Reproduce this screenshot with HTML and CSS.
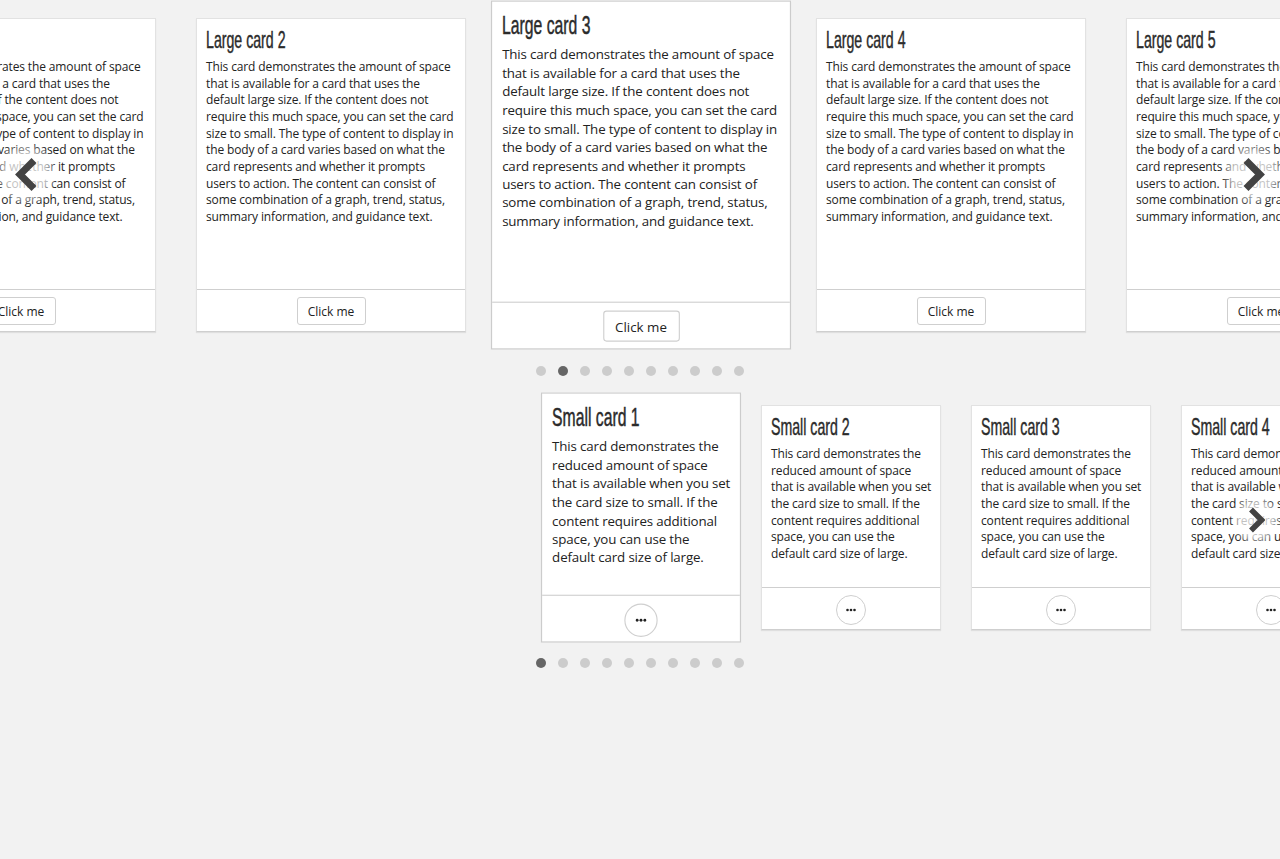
FILE: index.html
```html
<!DOCTYPE html>
<html lang="en">
<head>
<meta charset="utf-8">
<title>Cards carousel</title>
<link rel="stylesheet" href="styles.css">
</head>
<body>
<main class="page">
  <section class="carousel carousel-large">
    <div class="track track-large">
      <article class="card card-large">
        <div class="card-body">
          <h2 class="card-title"><span class="title-text">Large card 1</span></h2>
          <p class="card-text">This card demonstrates the amount of space that is available for a card that uses the default large size. If the content does not require this much space, you can set the card size to small. The type of content to display in the body of a card varies based on what the card represents and whether it prompts users to action. The content can consist of some combination of a graph, trend, status, summary information, and guidance text.</p>
        </div>
        <div class="card-footer"><button class="btn">Click me</button></div>
      </article>
      <article class="card card-large">
        <div class="card-body">
          <h2 class="card-title"><span class="title-text">Large card 2</span></h2>
          <p class="card-text">This card demonstrates the amount of space that is available for a card that uses the default large size. If the content does not require this much space, you can set the card size to small. The type of content to display in the body of a card varies based on what the card represents and whether it prompts users to action. The content can consist of some combination of a graph, trend, status, summary information, and guidance text.</p>
        </div>
        <div class="card-footer"><button class="btn">Click me</button></div>
      </article>
      <article class="card card-large is-active">
        <div class="card-body">
          <h2 class="card-title"><span class="title-text">Large card 3</span></h2>
          <p class="card-text">This card demonstrates the amount of space that is available for a card that uses the default large size. If the content does not require this much space, you can set the card size to small. The type of content to display in the body of a card varies based on what the card represents and whether it prompts users to action. The content can consist of some combination of a graph, trend, status, summary information, and guidance text.</p>
        </div>
        <div class="card-footer"><button class="btn">Click me</button></div>
      </article>
      <article class="card card-large">
        <div class="card-body">
          <h2 class="card-title"><span class="title-text">Large card 4</span></h2>
          <p class="card-text">This card demonstrates the amount of space that is available for a card that uses the default large size. If the content does not require this much space, you can set the card size to small. The type of content to display in the body of a card varies based on what the card represents and whether it prompts users to action. The content can consist of some combination of a graph, trend, status, summary information, and guidance text.</p>
        </div>
        <div class="card-footer"><button class="btn">Click me</button></div>
      </article>
      <article class="card card-large">
        <div class="card-body">
          <h2 class="card-title"><span class="title-text">Large card 5</span></h2>
          <p class="card-text">This card demonstrates the amount of space that is available for a card that uses the default large size. If the content does not require this much space, you can set the card size to small. The type of content to display in the body of a card varies based on what the card represents and whether it prompts users to action. The content can consist of some combination of a graph, trend, status, summary information, and guidance text.</p>
        </div>
        <div class="card-footer"><button class="btn">Click me</button></div>
      </article>
    </div>
    <button class="nav nav-prev nav-large" aria-label="Previous">
      <svg viewBox="0 0 23 35" width="23" height="35"><path d="M19 3.5 L5 17.5 L19 31.5" fill="none" stroke="#434343" stroke-width="7"/></svg>
    </button>
    <button class="nav nav-next nav-large" aria-label="Next">
      <svg viewBox="0 0 23 35" width="23" height="35"><path d="M4 3.5 L18 17.5 L4 31.5" fill="none" stroke="#434343" stroke-width="7"/></svg>
    </button>
    <div class="dots">
      <span class="dot"></span><span class="dot active"></span><span class="dot"></span><span class="dot"></span><span class="dot"></span><span class="dot"></span><span class="dot"></span><span class="dot"></span><span class="dot"></span><span class="dot"></span>
    </div>
  </section>

  <section class="carousel carousel-small">
    <div class="track track-small">
      <article class="card card-small is-active">
        <div class="card-body">
          <h2 class="card-title"><span class="title-text">Small card 1</span></h2>
          <p class="card-text">This card demonstrates the reduced amount of space that is available when you set the card size to small. If the content requires additional space, you can use the default card size of large.</p>
        </div>
        <div class="card-footer"><button class="btn-round" aria-label="More"><svg viewBox="0 0 10 4" width="10" height="4"><circle cx="1.5" cy="2" r="1.3" fill="#222"/><circle cx="5" cy="2" r="1.3" fill="#222"/><circle cx="8.5" cy="2" r="1.3" fill="#222"/></svg></button></div>
      </article>
      <article class="card card-small">
        <div class="card-body">
          <h2 class="card-title"><span class="title-text">Small card 2</span></h2>
          <p class="card-text">This card demonstrates the reduced amount of space that is available when you set the card size to small. If the content requires additional space, you can use the default card size of large.</p>
        </div>
        <div class="card-footer"><button class="btn-round" aria-label="More"><svg viewBox="0 0 10 4" width="10" height="4"><circle cx="1.5" cy="2" r="1.3" fill="#222"/><circle cx="5" cy="2" r="1.3" fill="#222"/><circle cx="8.5" cy="2" r="1.3" fill="#222"/></svg></button></div>
      </article>
      <article class="card card-small">
        <div class="card-body">
          <h2 class="card-title"><span class="title-text">Small card 3</span></h2>
          <p class="card-text">This card demonstrates the reduced amount of space that is available when you set the card size to small. If the content requires additional space, you can use the default card size of large.</p>
        </div>
        <div class="card-footer"><button class="btn-round" aria-label="More"><svg viewBox="0 0 10 4" width="10" height="4"><circle cx="1.5" cy="2" r="1.3" fill="#222"/><circle cx="5" cy="2" r="1.3" fill="#222"/><circle cx="8.5" cy="2" r="1.3" fill="#222"/></svg></button></div>
      </article>
      <article class="card card-small">
        <div class="card-body">
          <h2 class="card-title"><span class="title-text">Small card 4</span></h2>
          <p class="card-text">This card demonstrates the reduced amount of space that is available when you set the card size to small. If the content requires additional space, you can use the default card size of large.</p>
        </div>
        <div class="card-footer"><button class="btn-round" aria-label="More"><svg viewBox="0 0 10 4" width="10" height="4"><circle cx="1.5" cy="2" r="1.3" fill="#222"/><circle cx="5" cy="2" r="1.3" fill="#222"/><circle cx="8.5" cy="2" r="1.3" fill="#222"/></svg></button></div>
      </article>
    </div>
    <button class="nav nav-next nav-small" aria-label="Next">
      <svg viewBox="0 0 17 26" width="17" height="26"><path d="M3 2.5 L13.5 13 L3 23.5" fill="none" stroke="#434343" stroke-width="5.5"/></svg>
    </button>
    <div class="dots">
      <span class="dot active"></span><span class="dot"></span><span class="dot"></span><span class="dot"></span><span class="dot"></span><span class="dot"></span><span class="dot"></span><span class="dot"></span><span class="dot"></span><span class="dot"></span>
    </div>
  </section>
</main>
</body>
</html>
```

FILE: styles.css
```css
* { box-sizing: border-box; }

html, body {
  margin: 0;
  padding: 0;
  background: #f2f2f2;
}

body {
  font-family: "Open Sans", "DejaVu Sans", sans-serif;
  color: #222;
  width: 1280px;
  height: 859px;
  overflow: hidden;
}

.page {
  display: flex;
  flex-direction: column;
}

.carousel {
  position: relative;
  display: flex;
  flex-direction: column;
}

.carousel-small {
  margin-top: 16px;
}

.track {
  display: flex;
  overflow: hidden;
}

.track-large {
  justify-content: center;
  gap: 40px;
  padding: 18px 0 18px 2px;
}

.track-small {
  justify-content: flex-start;
  gap: 30px;
  padding: 13px 0 13px calc(50% - 89px);
}

.card {
  flex: 0 0 auto;
  display: flex;
  flex-direction: column;
  background: #fff;
  border: 1px solid #e2e2e2;
  border-bottom-color: #cfcfcf;
  box-shadow: 0 1px 1px rgba(0, 0, 0, 0.08);
}

.card.is-active {
  transform: scale(1.111);
  border-color: #cccccc;
}

.card-large {
  width: 270px;
  height: 314px;
}

.card-small {
  width: 180px;
  height: 225px;
}

.card-body {
  flex: 1 1 auto;
  padding: 6px 9px 0 9px;
}

.card-small .card-body {
  padding-right: 6px;
}

.card-title {
  margin: 0;
  height: 30px;
  font-family: "Liberation Sans", Arial, sans-serif;
  font-weight: 400;
  font-size: 24px;
  line-height: 30px;
  color: #2b2b2b;
  white-space: nowrap;
}

.title-text {
  display: inline-block;
  transform: scaleX(0.59);
  transform-origin: 0 50%;
  -webkit-text-stroke: 0.45px #2b2b2b;
}

.card-text {
  margin: 4px 0 0 0;
  font-size: 12px;
  line-height: 16.67px;
  letter-spacing: -0.13px;
  color: #222;
}

.card-footer {
  flex: 0 0 42px;
  border-top: 1px solid #cfcfcf;
  display: flex;
  justify-content: center;
  align-items: flex-start;
  padding-top: 7px;
}

.btn {
  font-family: "Open Sans", "DejaVu Sans", sans-serif;
  font-size: 12px;
  color: #222;
  background: #fff;
  border: 1px solid #cfcfcf;
  border-radius: 3px;
  height: 28px;
  width: 69px;
  padding: 0;
}

.btn-round {
  width: 30px;
  height: 30px;
  border-radius: 50%;
  border: 1px solid #cfcfcf;
  background: #fff;
  padding: 0;
  display: flex;
  align-items: center;
  justify-content: center;
}

.btn-round svg { display: block; }

.dots {
  display: flex;
  justify-content: center;
  gap: 12px;
  padding-top: 16px;
}

.carousel-small .dots {
  padding-top: 15px;
}

.dot {
  width: 10px;
  height: 10px;
  border-radius: 50%;
  background: #cccccc;
}

.dot.active {
  background: #666666;
}

.nav {
  position: absolute;
  border: 0;
  padding: 0;
  margin: 0;
  display: flex;
  align-items: center;
  justify-content: center;
  border-radius: 50%;
  background: radial-gradient(circle, rgba(255, 255, 255, 0.78) 0, rgba(255, 255, 255, 0.7) 45%, rgba(255, 255, 255, 0) 72%);
}

.nav svg { display: block; }

.nav-large {
  width: 64px;
  height: 64px;
  top: 142px;
}

.nav-large.nav-prev { left: -6px; }
.nav-large.nav-next { left: 1221px; }

.nav-small {
  width: 52px;
  height: 52px;
  top: 102px;
  left: 1230px;
}
```
